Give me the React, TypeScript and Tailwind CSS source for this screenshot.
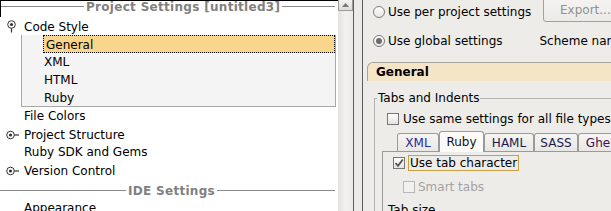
import React from "react";

const font = { fontFamily: '"DejaVu Sans", "Liberation Sans", sans-serif' };

function ExpandedIcon() {
  return (
    <svg width="12" height="14" viewBox="0 0 12 14" className="shrink-0">
      <circle cx="5.5" cy="4.5" r="3.8" fill="#fff" stroke="#333" strokeWidth="1" />
      <circle cx="5.5" cy="4.5" r="1.6" fill="#333" />
      <line x1="5.5" y1="8.3" x2="5.5" y2="12.5" stroke="#333" strokeWidth="1.2" />
    </svg>
  );
}

function CollapsedIcon() {
  return (
    <svg width="14" height="10" viewBox="0 0 14 10" className="shrink-0">
      <circle cx="4.5" cy="5" r="3.8" fill="#fff" stroke="#333" strokeWidth="1" />
      <circle cx="4.5" cy="5" r="1.6" fill="#333" />
      <line x1="8.3" y1="5" x2="13" y2="5" stroke="#333" strokeWidth="1.2" />
    </svg>
  );
}

function SectionHeader({ text, leftW }: { text: string; leftW: number }) {
  return (
    <div className="flex items-center h-full">
      <div className="h-px bg-[#8a8a8a] shrink-0" style={{ width: leftW }} />
      <span className="px-[2px] text-[12px] leading-[12px] font-bold tracking-[0.3px] text-[#808080] whitespace-nowrap">{text}</span>
      <div className="h-px bg-[#8a8a8a] flex-1" />
    </div>
  );
}

function Radio({ checked }: { checked?: boolean }) {
  return (
    <svg width="12" height="12" viewBox="0 0 12 12" className="shrink-0">
      <defs>
        <linearGradient id={checked ? "rg1" : "rg0"} x1="0" y1="0" x2="0" y2="1">
          <stop offset="0" stopColor="#ffffff" />
          <stop offset="1" stopColor="#e6e5e2" />
        </linearGradient>
      </defs>
      <circle cx="6" cy="6" r="5.5" fill={`url(#${checked ? "rg1" : "rg0"})`} stroke="#7a7a7a" strokeWidth="1" />
      {checked && <circle cx="6" cy="6" r="3" fill="#6b6b6b" />}
    </svg>
  );
}

function Checkbox({ checked, disabled }: { checked?: boolean; disabled?: boolean }) {
  return (
    <div
      className={`w-[12px] h-[12px] shrink-0 border ${
        disabled ? "border-[#b8b8b8] bg-[#f2f1ef]" : "border-[#777] bg-gradient-to-b from-white to-[#e4e3e0]"
      } flex items-center justify-center`}
    >
      {checked && (
        <svg width="10" height="10" viewBox="0 0 10 10">
          <path d="M1.5 5 L4 7.8 L8.8 1.5" fill="none" stroke="#555" strokeWidth="1.8" />
        </svg>
      )}
    </div>
  );
}

function Tab({ label, color, selected, w }: { label: string; color: string; selected?: boolean; w: number }) {
  return (
    <div
      className={`shrink-0 flex items-center justify-center border border-b-0 border-[#9a9a9a] rounded-t-[3px] text-[12px] ${
        selected ? "bg-[#fbfbfa] h-[21px] -mb-px z-10 relative" : "bg-gradient-to-b from-[#f6f5f3] to-[#e8e7e4] h-[18px]"
      }`}
      style={{ width: w, color }}
    >
      {label}
    </div>
  );
}

export default function App() {
  const rowText = "h-[18px] text-[12px] leading-[19px] text-black whitespace-nowrap";
  return (
    <div className="w-[611px] h-[211px] overflow-hidden flex items-start bg-[#edece9]" style={font}>
      {/* Left panel */}
      <div className="w-[338px] h-[211px] shrink-0 bg-white border-t border-black">
        <div className="h-[16px] border-l border-black pr-[3px]">
          <div className="h-[11px]">
            <SectionHeader text="Project Settings [untitled3]" leftW={83} />
          </div>
        </div>
        <div className="h-[18px] flex items-center pt-[1px]">
          <div className="w-[24px] pl-[6px] flex items-center"><ExpandedIcon /></div>
          <span className="text-[12px] text-black">Code Style</span>
        </div>
        <div className="ml-[21px] w-[315px] h-[72px] border border-t-0 border-[#a8a8a8] bg-[#f4f4f4]">
          <div className="h-[18px] ml-[21px] bg-[#fad68c] border border-dotted border-black flex items-center pl-[2px] pt-[1px]">
            <span className="text-[12px] leading-[16px] text-black">General</span>
          </div>
          <div className={`${rowText} pl-[22px]`}>XML</div>
          <div className={`${rowText} pl-[22px]`}>HTML</div>
          <div className={`${rowText} pl-[22px]`}>Ruby</div>
        </div>
        <div className={`${rowText} pl-[24px]`}>File Colors</div>
        <div className="h-[18px] flex items-center pt-[1px]">
          <div className="w-[24px] pl-[6px] flex items-center"><CollapsedIcon /></div>
          <span className="text-[12px] text-black">Project Structure</span>
        </div>
        <div className={`${rowText} pl-[24px]`}>Ruby SDK and Gems</div>
        <div className="h-[18px] flex items-center pt-[1px]">
          <div className="w-[24px] pl-[6px] flex items-center"><CollapsedIcon /></div>
          <span className="text-[12px] text-black">Version Control</span>
        </div>
        <div className="h-[20px] pr-[3px] pt-[3px]">
          <SectionHeader text="IDE Settings" leftW={126} />
        </div>
        <div className={`${rowText} pl-[24px]`}>Appearance</div>
      </div>

      {/* Scrollbar */}
      <div className="w-[15px] h-[211px] shrink-0 bg-gradient-to-r from-[#e2e1de] via-[#f3f2f0] to-[#ebeae7]">
        <div className="h-[11px] border border-t-0 border-[#9c9b98] bg-gradient-to-b from-[#f4f3f1] to-[#dddcd8] flex items-center justify-center">
          <svg width="7" height="4" viewBox="0 0 7 4">
            <path d="M0 4 L3.5 0 L7 4 Z" fill="#777" />
          </svg>
        </div>
      </div>
      <div className="w-px h-[211px] shrink-0 bg-[#5c5c5c]" />
      <div className="w-[8px] h-[211px] shrink-0 bg-[#ebeae7]" />
      <div className="w-px h-[211px] shrink-0 bg-[#5c5c5c]" />

      {/* Right panel */}
      <div className="flex-1 min-w-0 h-[211px] text-[12px] text-black">
        <div className="h-[24px] flex items-center pl-[10px] relative">
          <Radio />
          <span className="ml-[3px] whitespace-nowrap">Use per project settings</span>
          <div className="absolute left-[180px] -top-[3px] w-[80px] h-[25px] rounded-[3px] border border-[#a0a0a0] bg-gradient-to-b from-[#f5f4f2] to-[#ebeae7] flex items-center pl-[16px] text-[#909090]">
            Export...
          </div>
        </div>
        <div className="h-[38px] flex items-center pl-[10px] pb-[4px]">
          <Radio checked />
          <span className="ml-[3px] whitespace-nowrap">Use global settings</span>
          <span className="ml-[37px] whitespace-nowrap">Scheme name</span>
        </div>
        <div className="ml-[4px] h-[19px] bg-[#f5e5c7] border-t border-l border-[#a8a49c] rounded-tl-[6px] flex items-center pl-[8px] font-bold">
          General
        </div>
        <div className="ml-[11px] mt-[10px]">
          <div className="flex items-center h-[14px]">
            <div className="w-[3px] h-[7px] mt-[7px] border-l border-t border-[#b4b3b0]" />
            <span className="px-[1px] whitespace-nowrap">Tabs and Indents</span>
            <div className="flex-1 h-px bg-[#b4b3b0]" />
          </div>
          <div className="border-l border-[#b4b3b0] pl-[12px] h-[200px]">
            <div className="h-[24px] flex items-center pt-[3px]">
              <Checkbox />
              <span className="ml-[4px] whitespace-nowrap">Use same settings for all file types</span>
            </div>
            <div className="flex items-end h-[22px] ml-[10px]">
              <Tab label="XML" color="#2a2a9a" w={42} />
              <Tab label="Ruby" color="#111" selected w={45} />
              <Tab label="HAML" color="#1a1a50" w={50} />
              <Tab label="SASS" color="#1a1a50" w={44} />
              <Tab label="Ghe" color="#401050" w={40} />
            </div>
            <div className="ml-[-5px] border-l border-t border-[#9a9a9a] pl-[10px] h-[100px]">
              <div className="h-[20px] flex items-center mt-[1px]">
                <Checkbox checked />
                <span className="ml-[3px] px-[1px] border border-[#c9a040] leading-[14px] whitespace-nowrap">Use tab character</span>
              </div>
              <div className="h-[20px] flex items-center pl-[10px] mt-[4px]">
                <Checkbox disabled />
                <span className="ml-[3px] text-[#a3a3a3] whitespace-nowrap">Smart tabs</span>
              </div>
              <div className="h-[18px] flex items-end -ml-[5px] mt-[2px] leading-[14px]">Tab size</div>
            </div>
          </div>
        </div>
      </div>
    </div>
  );
}
